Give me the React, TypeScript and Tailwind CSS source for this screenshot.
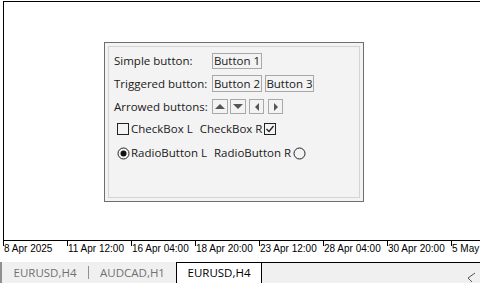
import React from 'react'

const dates = ['8 Apr 2025', '11 Apr 12:00', '16 Apr 04:00', '18 Apr 20:00', '23 Apr 12:00', '28 Apr 04:00', '30 Apr 20:00', '5 May']

const btn = 'h-[16px] border border-[#a8a8a8] bg-[#f3f3f3] flex items-center justify-center text-[11.5px] leading-none text-[#202020] whitespace-nowrap'

function Arrow({ dir }: { dir: 'up' | 'down' | 'left' | 'right' }) {
  const pts = dir === 'up' ? '1,7 6,2 11,7' : dir === 'down' ? '1,2 6,7 11,2' : dir === 'left' ? '6,1 2,5 6,9' : '2,1 6,5 2,9'
  const box = dir === 'up' || dir === 'down' ? 'w-[16px]' : 'w-[15px]'
  const vb = dir === 'up' || dir === 'down' ? '0 0 12 9' : '0 0 8 10'
  const sz = dir === 'up' || dir === 'down' ? { w: 12, h: 9 } : { w: 8, h: 10 }
  return (
    <div className={`${box} h-[15px] border border-[#a8a8a8] flex items-center justify-center`}>
      <svg width={sz.w} height={sz.h} viewBox={vb}><polygon points={pts} fill="#555" /></svg>
    </div>
  )
}

export default function App() {
  return (
    <div className="w-[480px] h-[283px] bg-white overflow-hidden flex flex-col font-['Open_Sans',sans-serif]">
      {/* chart */}
      <div className="h-[262px] flex flex-col">
        <div className="relative mt-[1px] ml-[3px] h-[240px] border-t border-l border-b border-black">
          {/* dialog */}
          <div className="absolute left-[100px] top-[40px] w-[260px] h-[160px] border border-[#6e6e6e] bg-[#f3f3f3] p-[3px]">
            <div className="h-full border border-[#d4d4d4] pl-[5px] pt-[5px] text-[11.5px] text-[#202020] leading-none whitespace-nowrap">
              <div className="flex items-center h-[17px]">
                <span className="w-[98px]">Simple button:</span>
                <div className={`${btn} w-[50px]`}>Button 1</div>
              </div>
              <div className="flex items-center h-[17px] mt-[6px]">
                <span className="w-[98px]">Triggered button:</span>
                <div className={`${btn} w-[50px] h-[17px] border-[#138a13] bg-[#add8e6]`}>Button 2</div>
                <div className={`${btn} w-[49px] h-[17px] ml-[3px]`}>Button 3</div>
              </div>
              <div className="flex items-center h-[15px] mt-[7px]">
                <span className="w-[98px]">Arrowed buttons:</span>
                <Arrow dir="up" />
                <div className="ml-[2px]"><Arrow dir="down" /></div>
                <div className="ml-[3px]"><Arrow dir="left" /></div>
                <div className="ml-[4px]"><Arrow dir="right" /></div>
              </div>
              <div className="flex items-center h-[14px] mt-[8px] pl-[3px]">
                <div className="w-[12px] h-[12px] border border-[#222]" />
                <span className="ml-[2px]">CheckBox L</span>
                <span className="ml-[7px]">CheckBox R</span>
                <div className="ml-[2px] w-[12px] h-[12px] border border-[#222] flex items-center justify-center">
                  <svg width="10" height="10" viewBox="0 0 10 10"><polyline points="1.5,5 4,7.5 8.5,2" fill="none" stroke="#222" strokeWidth="1.3" /></svg>
                </div>
              </div>
              <div className="flex items-center h-[14px] mt-[10px] pl-[3px]">
                <svg width="13" height="13" viewBox="0 0 13 13"><circle cx="6.5" cy="6.5" r="5.5" fill="none" stroke="#222" /><circle cx="6.5" cy="6.5" r="3" fill="#111" /></svg>
                <span className="ml-[1px]">RadioButton L</span>
                <span className="ml-[7px]">RadioButton R</span>
                <svg className="ml-[2px]" width="13" height="13" viewBox="0 0 13 13"><circle cx="6.5" cy="6.5" r="5.5" fill="none" stroke="#222" /></svg>
              </div>
            </div>
          </div>
        </div>
        {/* time axis */}
        <div className="flex pl-[3px] font-['Liberation_Sans',sans-serif] text-[10px] text-black">
          {dates.map((d) => (
            <div key={d} className="relative w-16 shrink-0 pt-[3px] leading-none whitespace-nowrap">
              <div className="absolute left-0 top-0 w-px h-[5px] bg-black" />
              <span className="pl-[1px]">{d}</span>
            </div>
          ))}
        </div>
      </div>
      {/* tabs */}
      <div className="flex-1 flex items-stretch bg-[#f0f0f0] text-[11.5px] relative">
        <div className="w-[2px] bg-[#909090]" />
        <div className="w-[86px] flex items-center justify-center text-[#707070]">EURUSD,H4</div>
        <div className="w-px h-[13px] self-center bg-[#909090]" />
        <div className="w-[87px] flex items-center justify-center text-[#707070]">AUDCAD,H1</div>
        <div className="w-[86px] flex items-center justify-center bg-white text-black border-l border-r border-t border-black">EURUSD,H4</div>
        <div className="flex-1 border-t border-black relative">
          <svg className="absolute right-[3px] bottom-0" width="12" height="11" viewBox="0 0 12 11"><polyline points="10,1 3,6 7,10" fill="none" stroke="#555" /></svg>
        </div>
      </div>
    </div>
  )
}
